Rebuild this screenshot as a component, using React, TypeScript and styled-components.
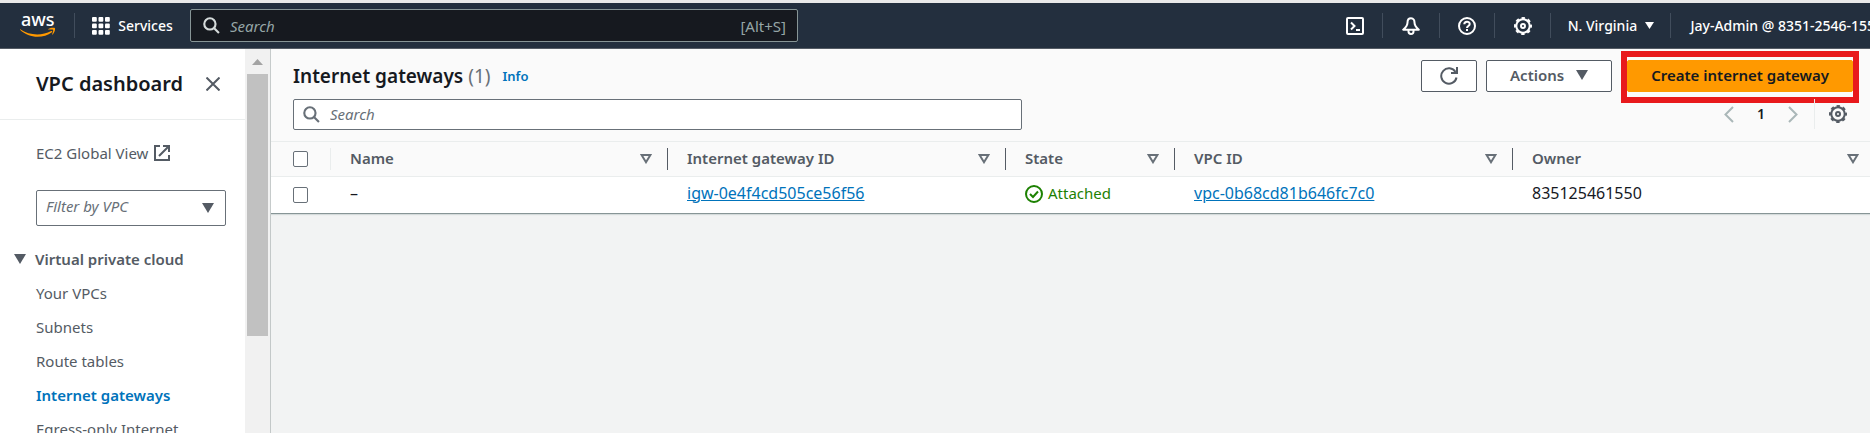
import React from "react";
import styled, { createGlobalStyle, css } from "styled-components";

const GlobalStyle = createGlobalStyle`
  *, *::before, *::after { box-sizing: border-box; }
  body {
    margin: 0;
    background: #f2f3f3;
    color: #16191f;
    font-family: "Noto Sans", "Open Sans", sans-serif;
    font-size: 15px;
    line-height: 20px;
    overflow: hidden;
  }
  button, input, select { font: inherit; color: inherit; }
  button { cursor: pointer; }
  a { color: #0073bb; }
`;

const Page = styled.div`
  display: flex;
  flex-direction: column;
  height: 100vh;
`;

/* ---------- top navigation ---------- */

const TopNav = styled.header`
  display: flex;
  align-items: center;
  flex: none;
  height: 49px;
  padding-left: 20px;
  overflow: hidden;
  white-space: nowrap;
  background: #232f3e;
  border-top: 3px solid #e9e9e9;
  border-bottom: 1px solid #545b64;
  color: #fff;
  font-size: 14px;
  font-weight: 500;
`;

const LogoLink = styled.a`
  display: flex;
  width: 54px;
  height: 26px;
`;

const NavDivider = styled.span`
  flex: none;
  width: 1px;
  height: 25px;
  background: #414d5c;
`;

const NavButton = styled.button<{ $width?: number }>`
  display: flex;
  align-items: center;
  justify-content: center;
  flex: none;
  gap: 8px;
  width: ${(p) => (p.$width ? `${p.$width}px` : "auto")};
  height: 40px;
  padding: 0;
  border: 0;
  background: none;
  color: #fff;
`;

const AccountButton = styled(NavButton)`
  margin-right: -5px;
  padding: 0 0 0 19px;
`;

const GlobalSearch = styled.label`
  display: flex;
  align-items: center;
  flex: 0 1 608px;
  gap: 10px;
  height: 33px;
  padding: 0 11px 0 12px;
  border: 1px solid #879596;
  border-radius: 2px;
  background: #16191f;
  color: #95a5a6;
  font-size: 15px;
  font-weight: 400;
  > svg { color: #d5dbdb; }
`;

const SearchInput = styled.input<{ $tone: string }>`
  flex: 1;
  min-width: 0;
  padding: 0;
  border: 0;
  outline: 0;
  background: none;
  &::placeholder {
    color: ${(p) => p.$tone};
    font-style: italic;
    opacity: 1;
  }
`;

const NavRight = styled.nav`
  display: flex;
  align-items: center;
  flex: none;
  margin-left: auto;
`;

/* ---------- side navigation ---------- */

const Body = styled.div`
  display: flex;
  flex: 1;
  min-height: 0;
`;

const SideNav = styled.aside`
  display: flex;
  flex: none;
  width: 271px;
  background: #fff;
  border-right: 1px solid #c3c8c8;
`;

const SideScroll = styled.div`
  flex: 1;
  overflow: hidden;
  color: #545b64;
`;

const SideHeader = styled.div`
  display: flex;
  align-items: center;
  justify-content: space-between;
  height: 71px;
  padding: 0 25px 0 36px;
  border-bottom: 1px solid #eaeded;
`;

const SideTitle = styled.h2`
  margin: 0;
  color: #16191f;
  font-size: 20px;
  font-weight: 600;
  line-height: 24px;
`;

const IconButton = styled.button`
  display: flex;
  padding: 0;
  border: 0;
  background: none;
  color: #545b64;
`;

const ExternalLink = styled.a`
  display: flex;
  align-items: center;
  gap: 6px;
  margin: 23px 0 27px 36px;
  color: #545b64;
  text-decoration: none;
`;

const FilterBox = styled.div`
  display: grid;
  align-items: center;
  margin: 0 19px 23px 36px;
  > * { grid-area: 1 / 1; }
  > svg { justify-self: end; margin-right: 12px; pointer-events: none; }
`;

const FilterSelect = styled.select`
  width: 100%;
  height: 36px;
  padding: 0 32px 4px 9px;
  appearance: none;
  border: 1px solid #687078;
  border-radius: 2px;
  background: #fff;
  color: #687078;
  font-style: italic;
`;

const SectionToggle = styled.button`
  display: flex;
  align-items: center;
  gap: 9px;
  padding: 0 0 0 14px;
  border: 0;
  background: none;
  font-weight: 600;
`;

const SideList = styled.ul`
  display: flex;
  flex-direction: column;
  gap: 14px;
  margin: 14px 0 0;
  padding: 0 0 0 36px;
  list-style: none;
`;

const SideLink = styled.a<{ $active?: boolean }>`
  color: #545b64;
  text-decoration: none;
  ${(p) => p.$active && css`
    color: #0073bb;
    font-weight: 600;
  `}
`;

const ScrollTrack = styled.div`
  display: flex;
  flex-direction: column;
  align-items: center;
  flex: none;
  width: 25px;
  padding: 10px 0 0;
  background: #f1f1f1;
`;

const ScrollThumb = styled.span`
  width: 21px;
  height: 70%;
  margin-top: 9px;
  background: #c1c1c1;
`;

/* ---------- main panel ---------- */

const Main = styled.main`
  flex: 1;
  min-width: 0;
`;

const Panel = styled.section`
  background: #fafafa;
  border-bottom: 1px solid #879596;
  box-shadow: 0 1px 1px #d5dbdb;
`;

const PanelTop = styled.div`
  display: flex;
  align-items: center;
  height: 50px;
  padding: 4px 11px 0 22px;
`;

const PanelTitle = styled.h1`
  margin: 0;
  font-size: 19px;
  font-weight: 600;
  line-height: 24px;
`;

const Counter = styled.span`
  color: #687078;
  font-weight: 400;
`;

const InfoLink = styled.a`
  margin-left: 12px;
  font-size: 13px;
  font-weight: 600;
  text-decoration: none;
`;

const Actions = styled.div`
  display: flex;
  align-items: center;
  gap: 9px;
  margin-left: auto;
`;

const Button = styled.button<{ $primary?: boolean }>`
  display: flex;
  align-items: center;
  justify-content: center;
  gap: 12px;
  height: 32px;
  padding: 0 23px 2px;
  border: 1px solid ${(p) => (p.$primary ? "#ff9900" : "#545b64")};
  border-radius: 2px;
  background: ${(p) => (p.$primary ? "#ff9900" : "#fff")};
  color: ${(p) => (p.$primary ? "#16191f" : "#545b64")};
  font-weight: 600;
  white-space: nowrap;
`;

const RefreshButton = styled(Button)`
  width: 56px;
  padding: 0;
`;

const Highlight = styled.div`
  margin: -9px 0 -11px;
  padding: 3px 0 5px;
  border: 6px solid #e8191c;
`;

const PanelTools = styled.div`
  display: flex;
  align-items: center;
  justify-content: space-between;
  height: 42px;
  padding: 0 23px 12px 22px;
`;

const TableSearch = styled.label`
  display: flex;
  align-items: center;
  flex: 0 1 729px;
  gap: 10px;
  height: 31px;
  padding: 0 9px;
  border: 1px solid #687078;
  border-radius: 2px;
  background: #fff;
  color: #687078;
`;

const Pager = styled.div`
  display: flex;
  align-items: center;
  gap: 23px;
  color: #16191f;
  font-size: 14px;
  font-weight: 600;
  > button { color: #aab7b8; }
`;

const PagerSettings = styled.span`
  display: flex;
  align-items: center;
  height: 30px;
  padding-left: 14px;
  margin-left: -7px;
  border-left: 1px solid #eaeded;
`;

const Table = styled.table`
  width: 100%;
  table-layout: fixed;
  border-collapse: collapse;
  border-top: 1px solid #eaeded;
`;

const Col = styled.col<{ $width?: number }>`
  width: ${(p) => (p.$width ? `${p.$width}px` : "auto")};
`;

const HeadRow = styled.tr`
  height: 35px;
  border-bottom: 1px solid #eaeded;
`;

const HeadCell = styled.th`
  padding: 0;
  color: #545b64;
  font-weight: 600;
  text-align: left;
`;

const HeadInner = styled.div<{ $light?: boolean; $last?: boolean }>`
  display: flex;
  align-items: center;
  justify-content: space-between;
  height: 22px;
  padding: 0 ${(p) => (p.$last ? 11 : 15)}px 0 19px;
  border-right: ${(p) => (p.$last ? 0 : 1)}px solid ${(p) => (p.$light ? "#eaeded" : "#545b64")};
  > span { padding-bottom: 2px; }
`;

const CheckInner = styled(HeadInner)`
  padding: 0 0 0 22px;
`;

const BodyRow = styled.tr`
  height: 36px;
  background: #fff;
`;

const Cell = styled.td`
  padding: 0 0 4px 19px;
  font-size: 16px;
`;

const CheckCell = styled.td`
  padding: 0 0 0 22px;
`;

const Checkbox = styled.input`
  display: block;
  width: 15px;
  height: 16px;
  margin: 0;
  appearance: none;
  border: 1px solid #687078;
  border-radius: 2px;
  background: #fff;
`;

const Status = styled.span`
  display: flex;
  align-items: center;
  gap: 5px;
  color: #1d8102;
  font-size: 15px;
  > svg { margin-top: 2px; }
`;

/* ---------- icons ---------- */

const SearchIcon = () => (
  <svg width="17" height="17" viewBox="0 0 16 16" fill="none" stroke="currentColor" strokeWidth="2" aria-hidden>
    <circle cx="6.5" cy="6.5" r="5.3" />
    <path d="M10.5 10.5 15 15" />
  </svg>
);

const GearIcon = () => (
  <svg width="18" height="18" viewBox="0 0 18 18" fill="none" stroke="currentColor" strokeWidth="2" aria-hidden>
    <circle cx="9" cy="9" r="6.7" />
    <circle cx="9" cy="9" r="8" strokeDasharray="3.4 2.883" strokeDashoffset="1.7" />
    <circle cx="9" cy="9" r="2" />
  </svg>
);

const Caret = ({ size = 12 }: { size?: number }) => (
  <svg width={size} height={size - 2} viewBox="0 0 12 10" preserveAspectRatio="none" fill="currentColor" aria-hidden>
    <path d="M0 0h12L6 10z" />
  </svg>
);

const SortIcon = () => (
  <svg width="12" height="10" viewBox="0 0 12 10" fill="none" stroke="#687078" strokeWidth="2" aria-hidden>
    <path d="M1.6 1h8.8L6 8.2z" />
  </svg>
);

const AngleIcon = ({ right = false }: { right?: boolean }) => (
  <svg width="10" height="17" viewBox="0 0 10 17" fill="none" stroke="currentColor" strokeWidth="2" aria-hidden>
    <path d={right ? "M1 1l7.5 7.5L1 16" : "M9 1 1.5 8.5 9 16"} />
  </svg>
);

const AwsLogo = () => (
  <svg width="36" height="26" viewBox="0 0 36 26" aria-label="aws">
    <text x="1" y="13" fill="#fff" fontFamily="Noto Sans, sans-serif" fontSize="18" fontWeight="500">aws</text>
    <g fill="#ff9900">
      <path d="M.2 16.2c9 6.3 21.5 6.8 31 1.8.9-.4 1.5.5.7 1.2-8.8 6.7-23 6.3-31.9-2.4-.5-.4-.2-.9.2-.6z" />
      <path d="M28.3 16c2-1.500 6-1.700 6.600-.9.6.8-.2 4.700-2.300 6.500-.4.3-.7.1-.5-.3.6-1.300 1.500-3.900 1-4.500-.5-.6-3-.4-4.500-.2-.5.1-.7-.3-.3-.6z" />
    </g>
  </svg>
);

const columns: { label: string; width?: number }[] = [
  { label: "Name", width: 337 },
  { label: "Internet gateway ID", width: 338 },
  { label: "State", width: 169 },
  { label: "VPC ID", width: 338 },
  { label: "Owner" },
];

const links = ["Your VPCs", "Subnets", "Route tables", "Internet gateways", "Egress-only Internet"];

const gridSteps = [0, 6.5, 13];

export default function App() {
  return (
    <Page>
      <GlobalStyle />
      <TopNav>
        <LogoLink href="#"><AwsLogo /></LogoLink>
        <NavDivider />
        <NavButton $width={115}>
          <svg width="18" height="18" viewBox="0 0 18 18" fill="#fff" aria-hidden>
            {gridSteps.map((y) => gridSteps.map((x) => <rect key={`${x}-${y}`} x={x} y={y} width="4.800" height="4.800" rx="1" />))}
          </svg>
          Services
        </NavButton>
        <GlobalSearch>
          <SearchIcon />
          <SearchInput $tone="#95a5a6" placeholder="Search" aria-label="Search services" />
          [Alt+S]
        </GlobalSearch>
        <NavRight>
          <NavButton $width={55} aria-label="CloudShell">
            <svg width="18" height="18" viewBox="0 0 18 18" fill="none" stroke="#fff" strokeWidth="2" aria-hidden>
              <rect x="1" y="1" width="16" height="16" rx="1" />
              <path d="M5 5.500 8.500 9 5 12.500M10 13h4" />
            </svg>
          </NavButton>
          <NavDivider />
          <NavButton $width={56} aria-label="Notifications">
            <svg width="18" height="18" viewBox="0 0 18 18" fill="none" stroke="#fff" strokeWidth="2" strokeLinejoin="round" aria-hidden>
              <path d="M9 1.200C6.500 1.200 5.500 3.200 5.500 5.500 5.500 8.300 4 10.300 1.200 12.700h15.600C14 10.300 12.500 8.300 12.500 5.500 12.500 3.200 11.500 1.200 9 1.200z" />
              <path d="M6.500 13v1.500a2.500 2.500 0 0 0 5 0V13" />
            </svg>
          </NavButton>
          <NavDivider />
          <NavButton $width={54} aria-label="Support">
            <svg width="18" height="18" viewBox="0 0 18 18" fill="none" stroke="#fff" strokeWidth="2" aria-hidden>
              <circle cx="9" cy="9" r="8" />
              <path d="M6.300 7.300C6.300 3.800 11.700 3.900 11.700 7c0 2-2.700 1.900-2.700 4M9 12v2" />
            </svg>
          </NavButton>
          <NavDivider />
          <NavButton $width={55} aria-label="Settings"><GearIcon /></NavButton>
          <NavDivider />
          <NavButton $width={119}>N. Virginia <Caret size={9} /></NavButton>
          <NavDivider />
          <AccountButton>Jay-Admin @ 8351-2546-155</AccountButton>
        </NavRight>
      </TopNav>
      <Body>
        <SideNav>
          <SideScroll>
            <SideHeader>
              <SideTitle>VPC dashboard</SideTitle>
              <IconButton aria-label="Close navigation">
                <svg width="14" height="14" viewBox="0 0 14 14" fill="none" stroke="currentColor" strokeWidth="2" aria-hidden>
                  <path d="M.5.5l13 13M13.500.5l-13 13" />
                </svg>
              </IconButton>
            </SideHeader>
            <ExternalLink href="#">
              EC2 Global View
              <svg width="16" height="16" viewBox="0 0 16 16" fill="none" stroke="currentColor" strokeWidth="2" aria-hidden>
                <path d="M6 1H1v14h14v-5M9 1h6v6M15 1 5 11" />
              </svg>
            </ExternalLink>
            <FilterBox>
              <FilterSelect aria-label="Filter by VPC"><option>Filter by VPC</option></FilterSelect>
              <Caret />
            </FilterBox>
            <SectionToggle aria-expanded="true"><Caret />Virtual private cloud</SectionToggle>
            <SideList>
              {links.map((text) => (
                <li key={text}><SideLink href="#" $active={text === "Internet gateways"}>{text}</SideLink></li>
              ))}
            </SideList>
          </SideScroll>
          <ScrollTrack aria-hidden>
            <svg width="11" height="6" viewBox="0 0 11 6" fill="#a3a3a3"><path d="M0 6 5.500 0 11 6z" /></svg>
            <ScrollThumb />
          </ScrollTrack>
        </SideNav>
        <Main>
          <Panel>
            <PanelTop>
              <PanelTitle>Internet gateways <Counter>(1)</Counter></PanelTitle>
              <InfoLink href="#">Info</InfoLink>
              <Actions>
                <RefreshButton aria-label="Refresh">
                  <svg width="18" height="18" viewBox="0 0 18 18" fill="none" stroke="currentColor" strokeWidth="2" aria-hidden>
                    <path d="M16.500 10.500A7.700 7.700 0 1 1 15.500 5M11 6h6V0" />
                  </svg>
                </RefreshButton>
                <Button>Actions <Caret /></Button>
                <Highlight><Button $primary>Create internet gateway</Button></Highlight>
              </Actions>
            </PanelTop>
            <PanelTools>
              <TableSearch>
                <SearchIcon />
                <SearchInput $tone="#687078" placeholder="Search" aria-label="Search internet gateways" />
              </TableSearch>
              <Pager>
                <IconButton aria-label="Previous page"><AngleIcon /></IconButton>
                <span>1</span>
                <IconButton aria-label="Next page"><AngleIcon right /></IconButton>
                <PagerSettings><IconButton aria-label="Preferences"><GearIcon /></IconButton></PagerSettings>
              </Pager>
            </PanelTools>
            <Table>
              <colgroup>
                <Col $width={60} />
                {columns.map((c) => <Col key={c.label} $width={c.width} />)}
              </colgroup>
              <thead>
                <HeadRow>
                  <HeadCell><CheckInner $light><Checkbox type="checkbox" aria-label="Select all" /></CheckInner></HeadCell>
                  {columns.map((c) => (
                    <HeadCell key={c.label}><HeadInner $last={!c.width}><span>{c.label}</span><SortIcon /></HeadInner></HeadCell>
                  ))}
                </HeadRow>
              </thead>
              <tbody>
                <BodyRow>
                  <CheckCell><Checkbox type="checkbox" aria-label="Select gateway" /></CheckCell>
                  <Cell>–</Cell>
                  <Cell><a href="#">igw-0e4f4cd505ce56f56</a></Cell>
                  <Cell>
                    <Status>
                      <svg width="18" height="18" viewBox="0 0 18 18" fill="none" stroke="currentColor" strokeWidth="2" aria-hidden>
                        <circle cx="9" cy="9" r="8" />
                        <path d="m5 9 3 3 5-5.500" />
                      </svg>
                      Attached
                    </Status>
                  </Cell>
                  <Cell><a href="#">vpc-0b68cd81b646fc7c0</a></Cell>
                  <Cell>835125461550</Cell>
                </BodyRow>
              </tbody>
            </Table>
          </Panel>
        </Main>
      </Body>
    </Page>
  );
}
